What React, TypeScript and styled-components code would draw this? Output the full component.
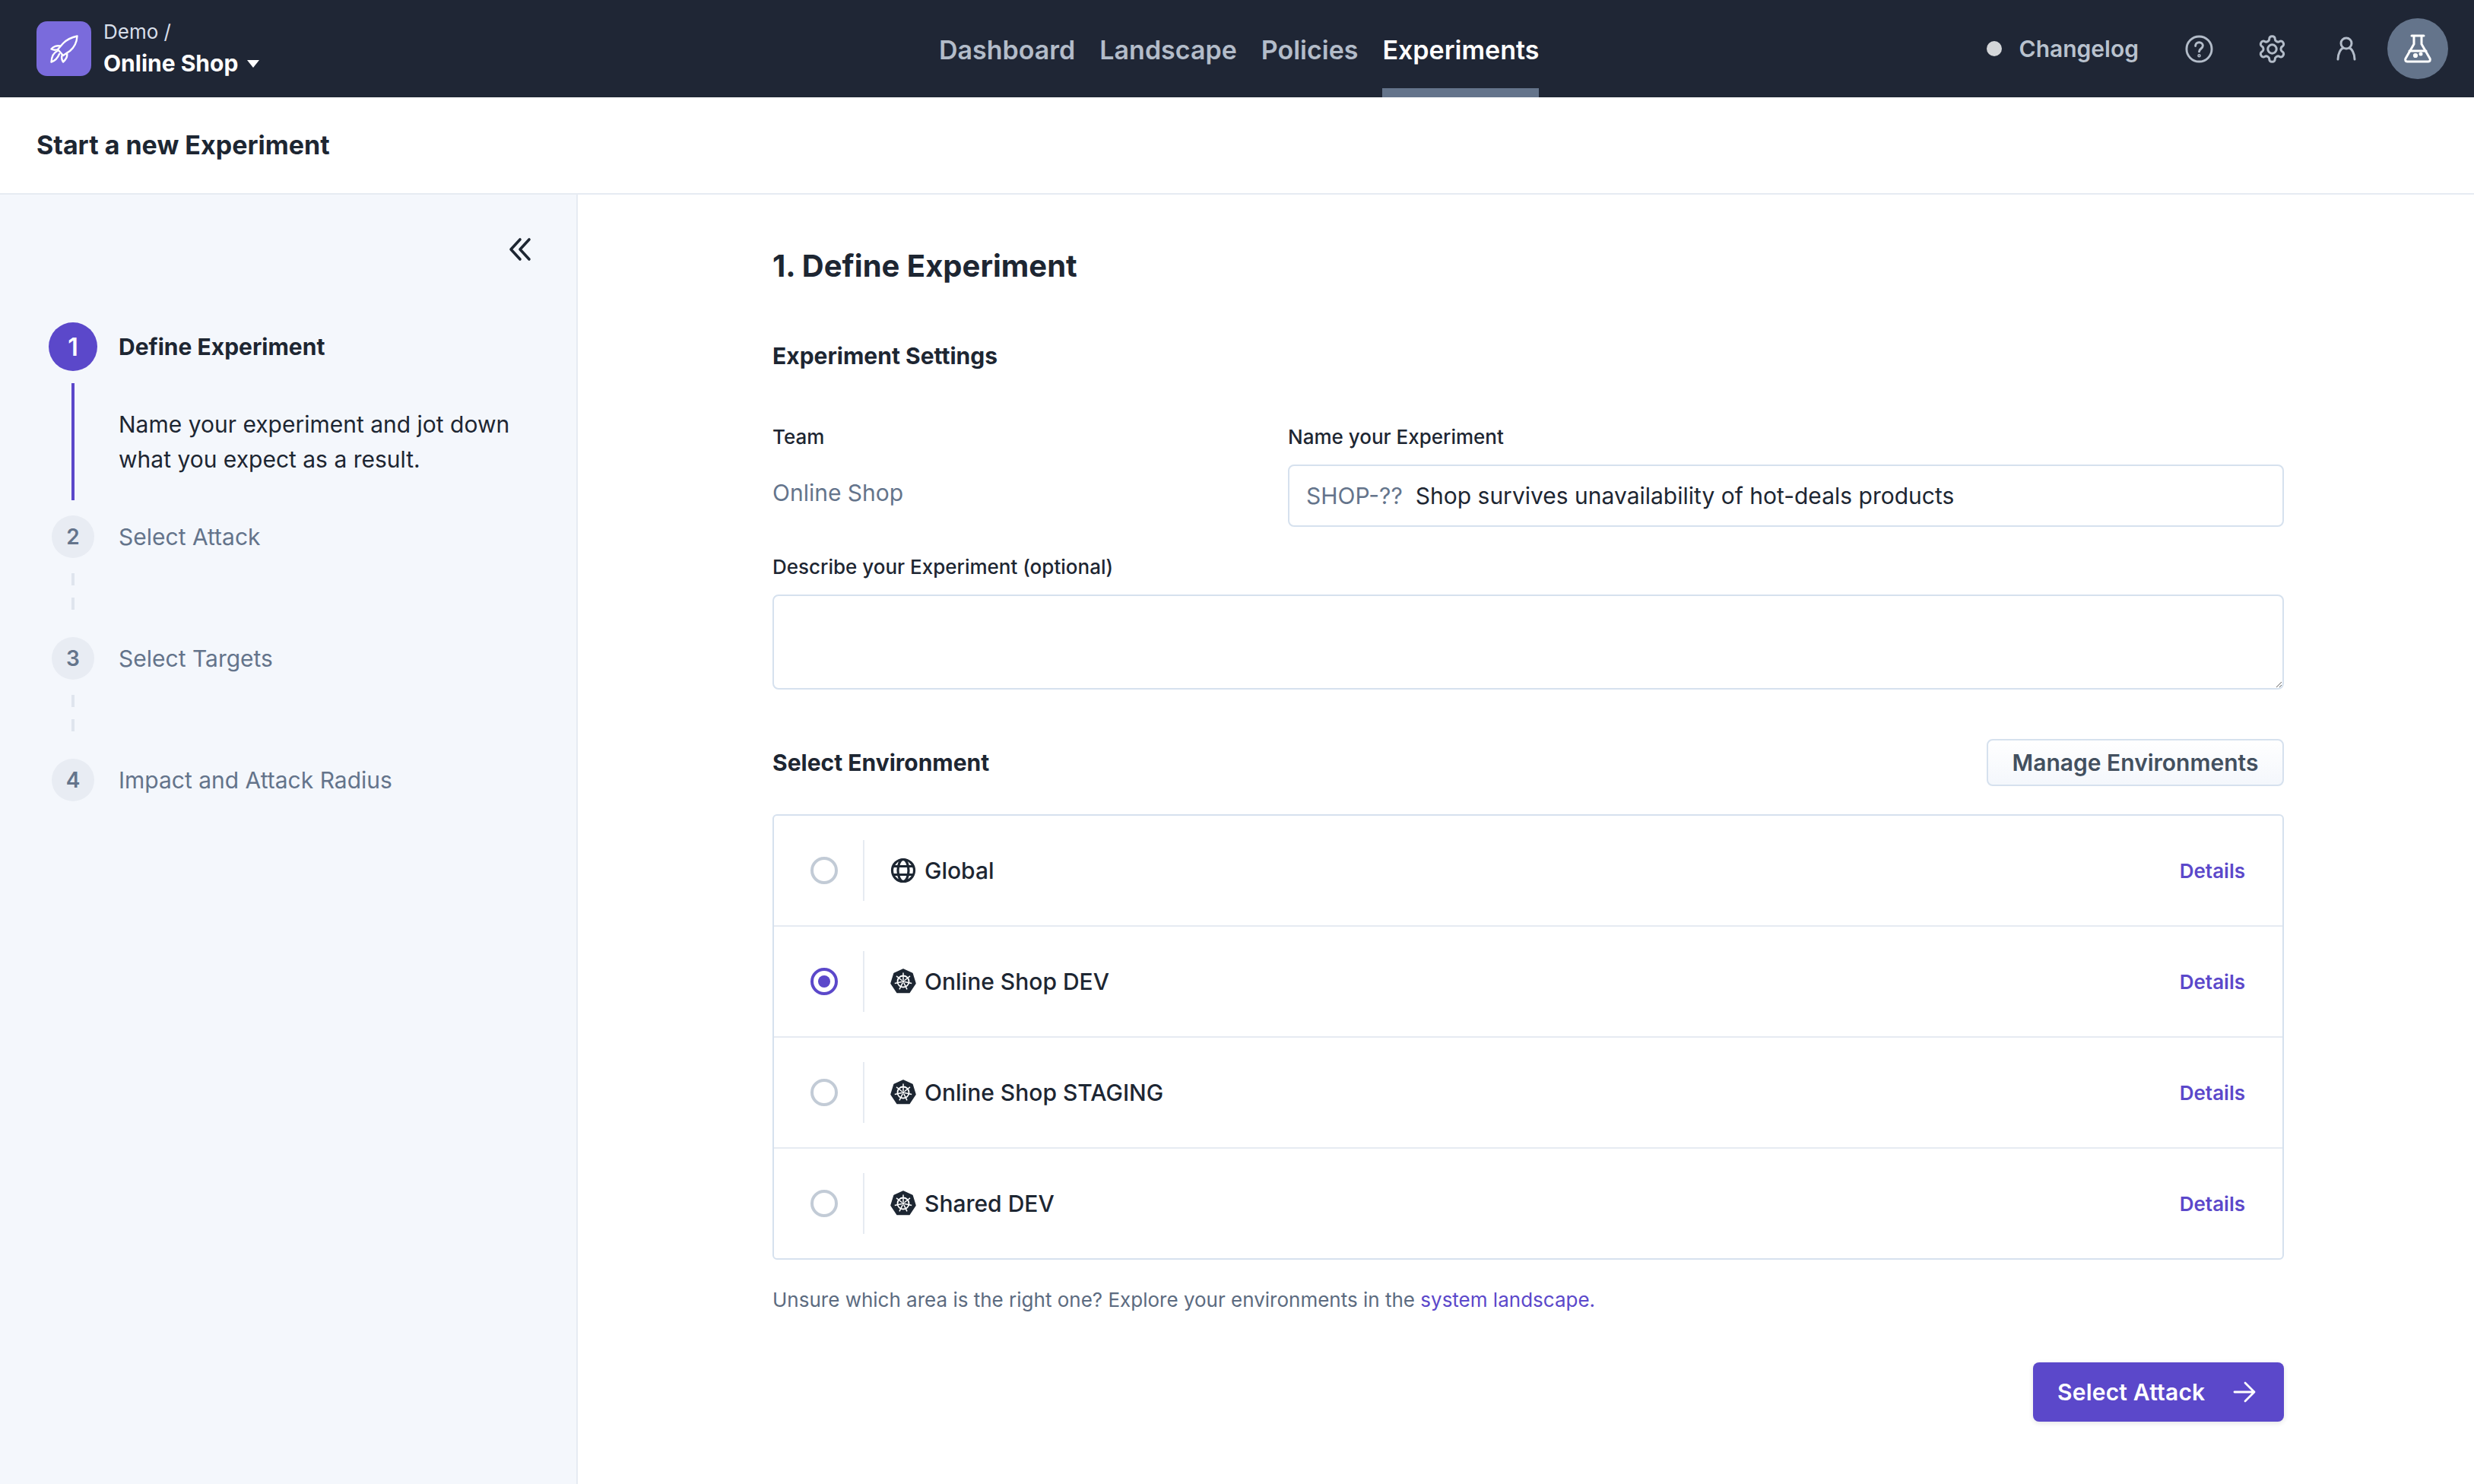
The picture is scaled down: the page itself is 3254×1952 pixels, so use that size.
import React from "react";
import styled, { createGlobalStyle } from "styled-components";

const GlobalStyle = createGlobalStyle`
  html, body {
    margin: 0;
    padding: 0;
    background: #ffffff;
  }
  * {
    box-sizing: border-box;
  }
  body {
    font-family: Inter, "Liberation Sans", sans-serif;
    color: #1d2632;
  }
`;

const Page = styled.div`
  display: flex;
  flex-direction: column;
  width: 3254px;
  height: 1952px;
  overflow: hidden;
`;

const TopBar = styled.header`
  display: grid;
  grid-template-columns: 1187px auto 1fr;
  align-items: stretch;
  height: 128px;
  padding: 0 34px 0 48px;
  background: #1f2635;
`;

const Brand = styled.div`
  display: flex;
  align-items: center;
  gap: 16px;
`;

const LogoTile = styled.div`
  display: flex;
  align-items: center;
  justify-content: center;
  width: 72px;
  height: 72px;
  border-radius: 14px;
  background: #7a6bdc;
`;

const BrandText = styled.div`
  display: flex;
  flex-direction: column;
  gap: 4px;
  padding-bottom: 2px;
`;

const BrandCrumb = styled.div`
  font-size: 26px;
  line-height: 36px;
  color: #d8dfea;
`;

const BrandName = styled.div`
  display: flex;
  align-items: center;
  gap: 12px;
  font-size: 30px;
  line-height: 38px;
  font-weight: 700;
  color: #ffffff;
`;

const Caret = styled.span`
  width: 0;
  height: 0;
  margin-top: 2px;
  border-left: 8.500px solid transparent;
  border-right: 8.500px solid transparent;
  border-top: 10px solid #ffffff;
`;

const Nav = styled.nav`
  display: flex;
  gap: 32px;
`;

const NavItem = styled.a<{ $active?: boolean }>`
  display: flex;
  align-items: center;
  height: 128px;
  padding-top: 2px;
  font-size: 34px;
  font-weight: 600;
  color: ${(p) => (p.$active ? "#ffffff" : "#b3bcc9")};
  border-bottom: 12px solid ${(p) => (p.$active ? "#64748b" : "transparent")};
  border-top: 12px solid transparent;
`;

const TopActions = styled.div`
  display: flex;
  align-items: center;
  justify-content: flex-end;
`;

const Changelog = styled.div`
  display: flex;
  align-items: center;
  gap: 23px;
  margin-right: 61px;
  font-size: 30px;
  font-weight: 600;
  color: #b9c2ce;
`;

const Dot = styled.span`
  width: 20px;
  height: 20px;
  border-radius: 50%;
  background: #d4d6d9;
`;

const IconSlot = styled.div<{ $gap: number }>`
  display: flex;
  margin-right: ${(p) => p.$gap}px;
  color: #b3bcc9;
`;

const Avatar = styled.div`
  display: flex;
  align-items: center;
  justify-content: center;
  width: 80px;
  height: 80px;
  border-radius: 50%;
  background: #64748b;
`;

const SubHeader = styled.div`
  display: flex;
  align-items: center;
  height: 128px;
  padding-left: 48px;
  padding-bottom: 2px;
  background: #ffffff;
  border-bottom: 2px solid #e6ebf2;
  font-size: 34px;
  font-weight: 700;
`;

const Body = styled.div`
  display: flex;
  flex: 1;
  min-height: 0;
`;

const Sidebar = styled.aside`
  flex: none;
  width: 760px;
  padding: 48px 56px 0 64px;
  background: #f4f7fc;
  border-right: 2px solid #e6ebf2;
`;

const CollapseRow = styled.div`
  display: flex;
  align-items: center;
  justify-content: flex-end;
  height: 48px;
  margin-bottom: 72px;
  padding-right: 2px;
  color: #1d2632;
`;

const Step = styled.div`
  display: grid;
  grid-template-columns: 64px 1fr;
  column-gap: 28px;
`;

const StepHead = styled.div`
  display: flex;
  align-items: center;
  justify-content: center;
`;

const StepBadge = styled.div<{ $active?: boolean }>`
  display: flex;
  align-items: center;
  justify-content: center;
  width: ${(p) => (p.$active ? 64 : 56)}px;
  height: ${(p) => (p.$active ? 64 : 56)}px;
  border-radius: 50%;
  font-size: ${(p) => (p.$active ? 32 : 28)}px;
  font-weight: 600;
  color: ${(p) => (p.$active ? "#ffffff" : "#64748b")};
  background: ${(p) => (p.$active ? "#5b48ca" : "#e8ecf3")};
`;

const StepTitle = styled.div<{ $active?: boolean }>`
  display: flex;
  align-items: center;
  font-size: 30px;
  font-weight: ${(p) => (p.$active ? 700 : 400)};
  color: ${(p) => (p.$active ? "#1d2632" : "#64748b")};
`;

const StepRail = styled.div<{ $height: number }>`
  display: flex;
  justify-content: center;
  height: ${(p) => p.$height}px;
`;

const SolidLine = styled.div`
  width: 4px;
  height: 154px;
  margin-top: 16px;
  background: #5b48ca;
`;

const DashedLine = styled.div`
  width: 4px;
  height: 48px;
  margin-top: 20px;
  background: repeating-linear-gradient(to bottom, #dfe5ee 0 16px, transparent 16px 32px);
`;

const StepText = styled.div`
  padding-top: 47px;
  font-size: 30px;
  line-height: 46px;
  color: #1d2632;
`;

const Main = styled.main`
  flex: 1;
  padding: 64px 250px 0 256px;
`;

const PageTitle = styled.h1`
  margin: 0;
  font-size: 40px;
  line-height: 60px;
  font-weight: 700;
`;

const SectionTitle = styled.h2`
  margin: 0;
  font-size: 30px;
  line-height: 44px;
  font-weight: 700;
`;

const SettingsTitle = styled(SectionTitle)`
  margin-top: 66px;
`;

const SettingsGrid = styled.div`
  display: grid;
  grid-template-columns: 678px 1fr;
  margin-top: 65px;
`;

const FieldLabel = styled.label`
  display: block;
  font-size: 26px;
  line-height: 40px;
  font-weight: 500;
`;

const TeamValue = styled.div`
  margin-top: 31px;
  font-size: 30px;
  line-height: 44px;
  color: #64748b;
`;

const NameField = styled.div`
  display: flex;
  align-items: center;
  gap: 17px;
  height: 82px;
  margin-top: 16px;
  padding: 0 22px;
  border: 2px solid #d6e1ee;
  border-radius: 8px;
  font-size: 30px;
`;

const NamePrefix = styled.span`
  color: #64748b;
`;

const DescribeLabel = styled(FieldLabel)`
  margin-top: 33px;
`;

const Describe = styled.textarea`
  display: block;
  width: 100%;
  height: 125px;
  margin-top: 16px;
  border: 2px solid #d6e1ee;
  border-radius: 8px;
  background: #ffffff;
`;

const EnvHeader = styled.div`
  display: flex;
  align-items: center;
  justify-content: space-between;
  margin-top: 65px;
`;

const OutlineButton = styled.button`
  width: 391px;
  height: 62px;
  padding: 0;
  border: 2px solid #d6e1ee;
  border-radius: 8px;
  background: linear-gradient(to bottom, #ffffff, #f4f7fc);
  font-family: inherit;
  font-size: 30px;
  font-weight: 600;
  color: #43505f;
`;

const EnvList = styled.div`
  margin-top: 37px;
  border: 2px solid #d6e1ee;
  border-radius: 6px;
`;

const EnvRow = styled.div`
  display: flex;
  align-items: center;
  height: 146px;
  padding: 0 49px 0 48px;
  border-top: 2px solid #e6ebf2;

  &:first-child {
    height: 144px;
    border-top: none;
  }
`;

const Radio = styled.span<{ $checked?: boolean }>`
  display: flex;
  align-items: center;
  justify-content: center;
  flex: none;
  width: 36px;
  height: 36px;
  border-radius: 50%;
  border: 4px solid ${(p) => (p.$checked ? "#5b48ca" : "#c2cbd6")};

  &::after {
    content: "";
    display: ${(p) => (p.$checked ? "block" : "none")};
    width: 16px;
    height: 16px;
    border-radius: 50%;
    background: #5b48ca;
  }
`;

const RowDivider = styled.span`
  flex: none;
  width: 2px;
  height: 80px;
  margin: 0 34px 0 33px;
  background: #e6ebf2;
`;

const EnvName = styled.div`
  display: flex;
  flex: 1;
  align-items: center;
  gap: 11px;
  font-size: 30px;
  font-weight: 500;
`;

const DetailsLink = styled.a`
  font-size: 26px;
  font-weight: 600;
  color: #5b48ca;
`;

const HelpText = styled.p`
  margin: 35px 0 0;
  font-size: 26px;
  line-height: 36px;
  color: #5c6b80;
`;

const HelpLink = styled.a`
  color: #5b48ca;
`;

const FooterRow = styled.div`
  display: flex;
  justify-content: flex-end;
  margin-top: 64px;
`;

const PrimaryButton = styled.button`
  display: flex;
  align-items: center;
  justify-content: space-between;
  width: 330px;
  height: 78px;
  padding: 0 37px 0 32px;
  border: none;
  border-radius: 8px;
  background: #5b48ca;
  box-shadow: 0 2px 6px rgba(29, 38, 50, 0.12);
  font-family: inherit;
  font-size: 30px;
  font-weight: 600;
  letter-spacing: 0.2px;
  color: #ffffff;
  white-space: nowrap;
`;

const RocketIcon = () => (
  <svg width="37" height="37" viewBox="0 0 37 37" fill="none" stroke="#fff" strokeWidth="2.400" strokeLinejoin="round" strokeLinecap="round">
    <path d="M35.500 1.500C28 3 22 6 17 11L10 19l7 8 9-6c6-5 9-11 9.500-19.500z" />
    <path d="M13 14.500C9 13.500 4 15 1.500 18.500c3 1.500 6 1.500 8.500 .5" />
    <path d="M22 24c1 4-1 8-5 11.500-2-3-2.500-6-1-9.500" />
    <path d="M9.500 21C5 23 2 28 1.500 35.500 6 34 10 30 12 25" />
  </svg>
);

const HelpIcon = () => (
  <svg width="37" height="37" viewBox="0 0 38 38" fill="none" stroke="currentColor" strokeWidth="3" strokeLinecap="round">
    <circle cx="19" cy="19" r="17" />
    <path d="M14 15c0-3 2-5 5-5s5 2 5 4.500c0 4-5 4-5 8" />
    <circle cx="19" cy="28" r="0.800" />
  </svg>
);

const GearIcon = () => (
  <svg width="37" height="37" viewBox="1 1 22 22" fill="none" stroke="currentColor" strokeWidth="1.800" strokeLinecap="round" strokeLinejoin="round">
    <path d="M12.220 2h-.44a2 2 0 0 0-2 2v.18a2 2 0 0 1-1 1.730l-.43.25a2 2 0 0 1-2 0l-.15-.08a2 2 0 0 0-2.730.73l-.22.380a2 2 0 0 0 .73 2.730l.15.1a2 2 0 0 1 1 1.720v.510a2 2 0 0 1-1 1.740l-.15.090a2 2 0 0 0-.73 2.730l.22.380a2 2 0 0 0 2.730.730l.15-.080a2 2 0 0 1 2 0l.43.250a2 2 0 0 1 1 1.730V20a2 2 0 0 0 2 2h.44a2 2 0 0 0 2-2v-.18a2 2 0 0 1 1-1.730l.43-.250a2 2 0 0 1 2 0l.15.080a2 2 0 0 0 2.730-.730l.22-.390a2 2 0 0 0-.73-2.730l-.15-.080a2 2 0 0 1-1-1.740v-.500a2 2 0 0 1 1-1.740l.15-.090a2 2 0 0 0 .73-2.730l-.22-.380a2 2 0 0 0-2.730-.730l-.15.080a2 2 0 0 1-2 0l-.43-.250a2 2 0 0 1-1-1.730V4a2 2 0 0 0-2-2z" />
    <circle cx="12" cy="12" r="3.400" />
  </svg>
);

const UserIcon = () => (
  <svg width="26" height="32" viewBox="0 0 26 32" fill="none" stroke="currentColor" strokeWidth="3" strokeLinecap="round">
    <circle cx="13" cy="9" r="7" />
    <path d="M2 30c0-8 4-14 7-15M24 30c0-8-4-14-7-15" />
  </svg>
);

const FlaskIcon = () => (
  <svg width="38" height="38" viewBox="0 0 38 38" fill="none" stroke="#fff" strokeWidth="3" strokeLinecap="round" strokeLinejoin="round">
    <path d="M11 2h16M14 2v11L3 32c-1 2 0 4 2 4h28c2 0 3-2 2-4L24 13V2" />
    <path d="M8 22h22" />
    <circle cx="16" cy="28" r="1.600" fill="#fff" />
    <circle cx="23" cy="26" r="1" fill="#fff" />
  </svg>
);

const ChevronsIcon = () => (
  <svg width="32" height="32" viewBox="0 0 32 32" fill="none" stroke="currentColor" strokeWidth="3.600" strokeLinecap="round" strokeLinejoin="round">
    <path d="M16 3L4 16l12 13M28 3L16 16l12 13" />
  </svg>
);

const GlobeIcon = () => (
  <svg width="34" height="34" viewBox="0 0 34 34" fill="none" stroke="#1d2632" strokeWidth="3.200">
    <circle cx="17" cy="17" r="14.500" />
    <ellipse cx="17" cy="17" rx="7" ry="14.500" />
    <path d="M4 11.500h26M4 22.500h26" />
  </svg>
);

const spokes = [0, 51.4, 102.9, 154.3, 205.7, 257.1, 308.6];

const KubeIcon = () => (
  <svg width="34" height="34" viewBox="0 0 34 34">
    <path d="M17 1l12 5.500 4 13-8 12H9L1 19.500l4-13z" fill="#1d2632" stroke="#1d2632" strokeWidth="1.500" strokeLinejoin="round" />
    <circle cx="17" cy="17" r="7.500" fill="none" stroke="#fff" strokeWidth="1.800" />
    <circle cx="17" cy="17" r="1.800" fill="#fff" />
    {spokes.map((a) => (
      <path key={a} d="M17 5.500V15" stroke="#fff" strokeWidth="1.500" transform={`rotate(${a} 17 17)`} />
    ))}
  </svg>
);

const ArrowIcon = () => (
  <svg width="30" height="28" viewBox="0 0 30 28" fill="none" stroke="#fff" strokeWidth="2.800" strokeLinecap="round" strokeLinejoin="round">
    <path d="M2 14h26M16 2l12 12-12 12" />
  </svg>
);

const environments = [
  { name: "Global", global: true },
  { name: "Online Shop DEV", checked: true },
  { name: "Online Shop STAGING" },
  { name: "Shared DEV" },
];

const pendingSteps = ["Select Attack", "Select Targets", "Impact and Attack Radius"];

export default function App() {
  return (
    <Page>
      <GlobalStyle />
      <TopBar>
        <Brand>
          <LogoTile>
            <RocketIcon />
          </LogoTile>
          <BrandText>
            <BrandCrumb>Demo /</BrandCrumb>
            <BrandName>
              Online Shop <Caret />
            </BrandName>
          </BrandText>
        </Brand>
        <Nav>
          <NavItem>Dashboard</NavItem>
          <NavItem>Landscape</NavItem>
          <NavItem>Policies</NavItem>
          <NavItem $active>Experiments</NavItem>
        </Nav>
        <TopActions>
          <Changelog>
            <Dot />
            Changelog
          </Changelog>
          <IconSlot $gap={59}>
            <HelpIcon />
          </IconSlot>
          <IconSlot $gap={66}>
            <GearIcon />
          </IconSlot>
          <IconSlot $gap={41}>
            <UserIcon />
          </IconSlot>
          <Avatar>
            <FlaskIcon />
          </Avatar>
        </TopActions>
      </TopBar>
      <SubHeader>Start a new Experiment</SubHeader>
      <Body>
        <Sidebar>
          <CollapseRow>
            <ChevronsIcon />
          </CollapseRow>
          <Step>
            <StepHead>
              <StepBadge $active>1</StepBadge>
            </StepHead>
            <StepTitle $active>Define Experiment</StepTitle>
            <StepRail $height={190}>
              <SolidLine />
            </StepRail>
            <StepText>
              Name your experiment and jot down
              <br />
              what you expect as a result.
            </StepText>
          </Step>
          {pendingSteps.map((title, i) => (
            <Step key={title}>
              <StepHead>
                <StepBadge>{i + 2}</StepBadge>
              </StepHead>
              <StepTitle>{title}</StepTitle>
              {i < pendingSteps.length - 1 && (
                <StepRail $height={104}>
                  <DashedLine />
                </StepRail>
              )}
            </Step>
          ))}
        </Sidebar>
        <Main>
          <PageTitle>1. Define Experiment</PageTitle>
          <SettingsTitle>Experiment Settings</SettingsTitle>
          <SettingsGrid>
            <div>
              <FieldLabel>Team</FieldLabel>
              <TeamValue>Online Shop</TeamValue>
            </div>
            <div>
              <FieldLabel>Name your Experiment</FieldLabel>
              <NameField>
                <NamePrefix>SHOP-??</NamePrefix>
                Shop survives unavailability of hot-deals products
              </NameField>
            </div>
          </SettingsGrid>
          <DescribeLabel>Describe your Experiment (optional)</DescribeLabel>
          <Describe />
          <EnvHeader>
            <SectionTitle>Select Environment</SectionTitle>
            <OutlineButton>Manage Environments</OutlineButton>
          </EnvHeader>
          <EnvList>
            {environments.map((env) => (
              <EnvRow key={env.name}>
                <Radio $checked={env.checked} />
                <RowDivider />
                <EnvName>
                  {env.global ? <GlobeIcon /> : <KubeIcon />}
                  {env.name}
                </EnvName>
                <DetailsLink>Details</DetailsLink>
              </EnvRow>
            ))}
          </EnvList>
          <HelpText>
            Unsure which area is the right one? Explore your environments in the{" "}
            <HelpLink>system landscape.</HelpLink>
          </HelpText>
          <FooterRow>
            <PrimaryButton>
              Select Attack
              <ArrowIcon />
            </PrimaryButton>
          </FooterRow>
        </Main>
      </Body>
    </Page>
  );
}
